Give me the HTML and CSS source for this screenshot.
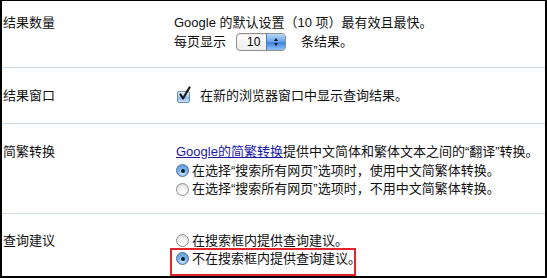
FILE: index.html
```html
<!DOCTYPE html>
<html lang="zh-CN">
<head>
<meta charset="utf-8">
<title>偏好设置</title>
<link rel="stylesheet" href="styles.css">
</head>
<body>
<div class="panel">
  <div class="row row-first">
    <div class="label">结果数量</div>
    <div class="content">
      <div class="line">Google 的默认设置（10 项）最有效且最快。</div>
      <div class="line line-select">每页显示 <span class="select"><span class="select-value">10</span><span class="select-btn"><span class="tri-up"></span><span class="tri-down"></span></span></span>条结果。</div>
    </div>
  </div>
  <div class="row row-window">
    <div class="label">结果窗口</div>
    <div class="content">
      <div class="line"><span class="checkbox"><svg width="15" height="16" viewBox="0 0 15 16"><path d="M3.5 8.5 L6 12.5 L12.5 1.5" fill="none" stroke="#1b1b1b" stroke-width="2.2" stroke-linecap="round" stroke-linejoin="round"/></svg></span>在新的浏览器窗口中显示查询结果。</div>
    </div>
  </div>
  <div class="row row-conv">
    <div class="label">简繁转换</div>
    <div class="content indent">
      <div class="line"><a href="#" class="link">Google的简繁转换</a>提供中文简体和繁体文本之间的“翻译”转换。</div>
      <div class="line"><span class="radio on"></span>在选择“搜索所有网页”选项时，使用中文简繁体转换。</div>
      <div class="line"><span class="radio"></span>在选择“搜索所有网页”选项时，不用中文简繁体转换。</div>
    </div>
  </div>
  <div class="row row-suggest">
    <div class="label">查询建议</div>
    <div class="content indent">
      <div class="line"><span class="radio"></span>在搜索框内提供查询建议。</div>
      <div class="line highlighted"><span class="radio on"></span>不在搜索框内提供查询建议。</div>
    </div>
  </div>
</div>
</body>
</html>
```

FILE: styles.css
```css
html, body {
  margin: 0;
  padding: 0;
  background: #fff;
}

.panel {
  box-sizing: border-box;
  width: 547px;
  height: 278px;
  border-style: solid;
  border-color: #000;
  border-width: 1px 2px 2px 2px;
  overflow: hidden;
  font-family: "Liberation Sans", "Noto Sans CJK SC", sans-serif;
  font-size: 13px;
  color: #111;
}

.row {
  display: grid;
  grid-template-columns: 172px 1fr;
  border-top: 1px solid #c9d8ea;
  padding: 19px 0 18px 0;
}

.row-first {
  border-top: none;
  padding: 13px 0 16px 0;
}

.row-conv {
  padding: 19px 0 14px 0;
}

.row-suggest {
  padding: 18px 0 0 0;
}

.label {
  padding-left: 1px;
  line-height: 18px;
}

.content.indent {
  padding-left: 2px;
}

.line {
  line-height: 18px;
  height: 18px;
  white-space: nowrap;
  display: flex;
  align-items: center;
}

.row-conv .line {
  height: 18.5px;
  line-height: 18.5px;
}

.line-select {
  height: 19px;
}

.select {
  display: inline-flex;
  box-sizing: border-box;
  width: 50px;
  height: 18px;
  margin: 0 15px 0 10px;
  border: 1px solid #8d8d8d;
  border-radius: 4px;
  background: linear-gradient(#fdfdfd, #ececec);
  overflow: hidden;
  box-shadow: inset 0 1px 1px rgba(0,0,0,0.08);
}

.select-value {
  flex: 1;
  padding-left: 10px;
  font-size: 12px;
  line-height: 16px;
  color: #000;
}

.select-btn {
  width: 18px;
  border-left: 1px solid #4d7cc0;
  background: linear-gradient(#b9d6f7 0%, #6ea6ea 45%, #3d84e0 55%, #8fc2f6 100%);
  display: flex;
  flex-direction: column;
  align-items: center;
  justify-content: center;
  gap: 2px;
}

.tri-up {
  width: 0;
  height: 0;
  border-left: 2.5px solid transparent;
  border-right: 2.5px solid transparent;
  border-bottom: 3px solid #111;
}

.tri-down {
  width: 0;
  height: 0;
  border-left: 2.5px solid transparent;
  border-right: 2.5px solid transparent;
  border-top: 3px solid #111;
}

.checkbox {
  position: relative;
  box-sizing: border-box;
  width: 13px;
  height: 12px;
  margin: 2px 10px 0 3px;
  border: 1px solid #6f8fb8;
  border-radius: 2px;
  background: linear-gradient(#e8f1fc, #a9c8ee 50%, #8ab6ea 51%, #c7def8);
  flex: none;
}

.checkbox svg {
  position: absolute;
  left: -1px;
  top: -6px;
}

.link {
  color: #1a1aa6;
  text-decoration: underline;
}

.radio {
  box-sizing: border-box;
  width: 13px;
  height: 13px;
  margin: 0 3px 0 0;
  border-radius: 50%;
  border: 1px solid #8e8e8e;
  background: radial-gradient(circle at 50% 70%, #ffffff 0%, #f2f2f2 45%, #d4d4d4 100%);
  flex: none;
  display: inline-flex;
  align-items: center;
  justify-content: center;
}

.radio.on {
  border-color: #4c6f9f;
  background: radial-gradient(circle at 50% 75%, #cfe6fd 0%, #7fb4ee 45%, #4d8fdc 100%);
}

.radio.on::after {
  content: "";
  width: 4px;
  height: 4px;
  border-radius: 50%;
  background: #0d1a2c;
}

.highlighted {
  position: relative;
}

.highlighted::after {
  content: "";
  position: absolute;
  left: -6px;
  top: -2px;
  width: 186px;
  height: 28px;
  box-sizing: border-box;
  border: 2px solid #e0252c;
}
```
